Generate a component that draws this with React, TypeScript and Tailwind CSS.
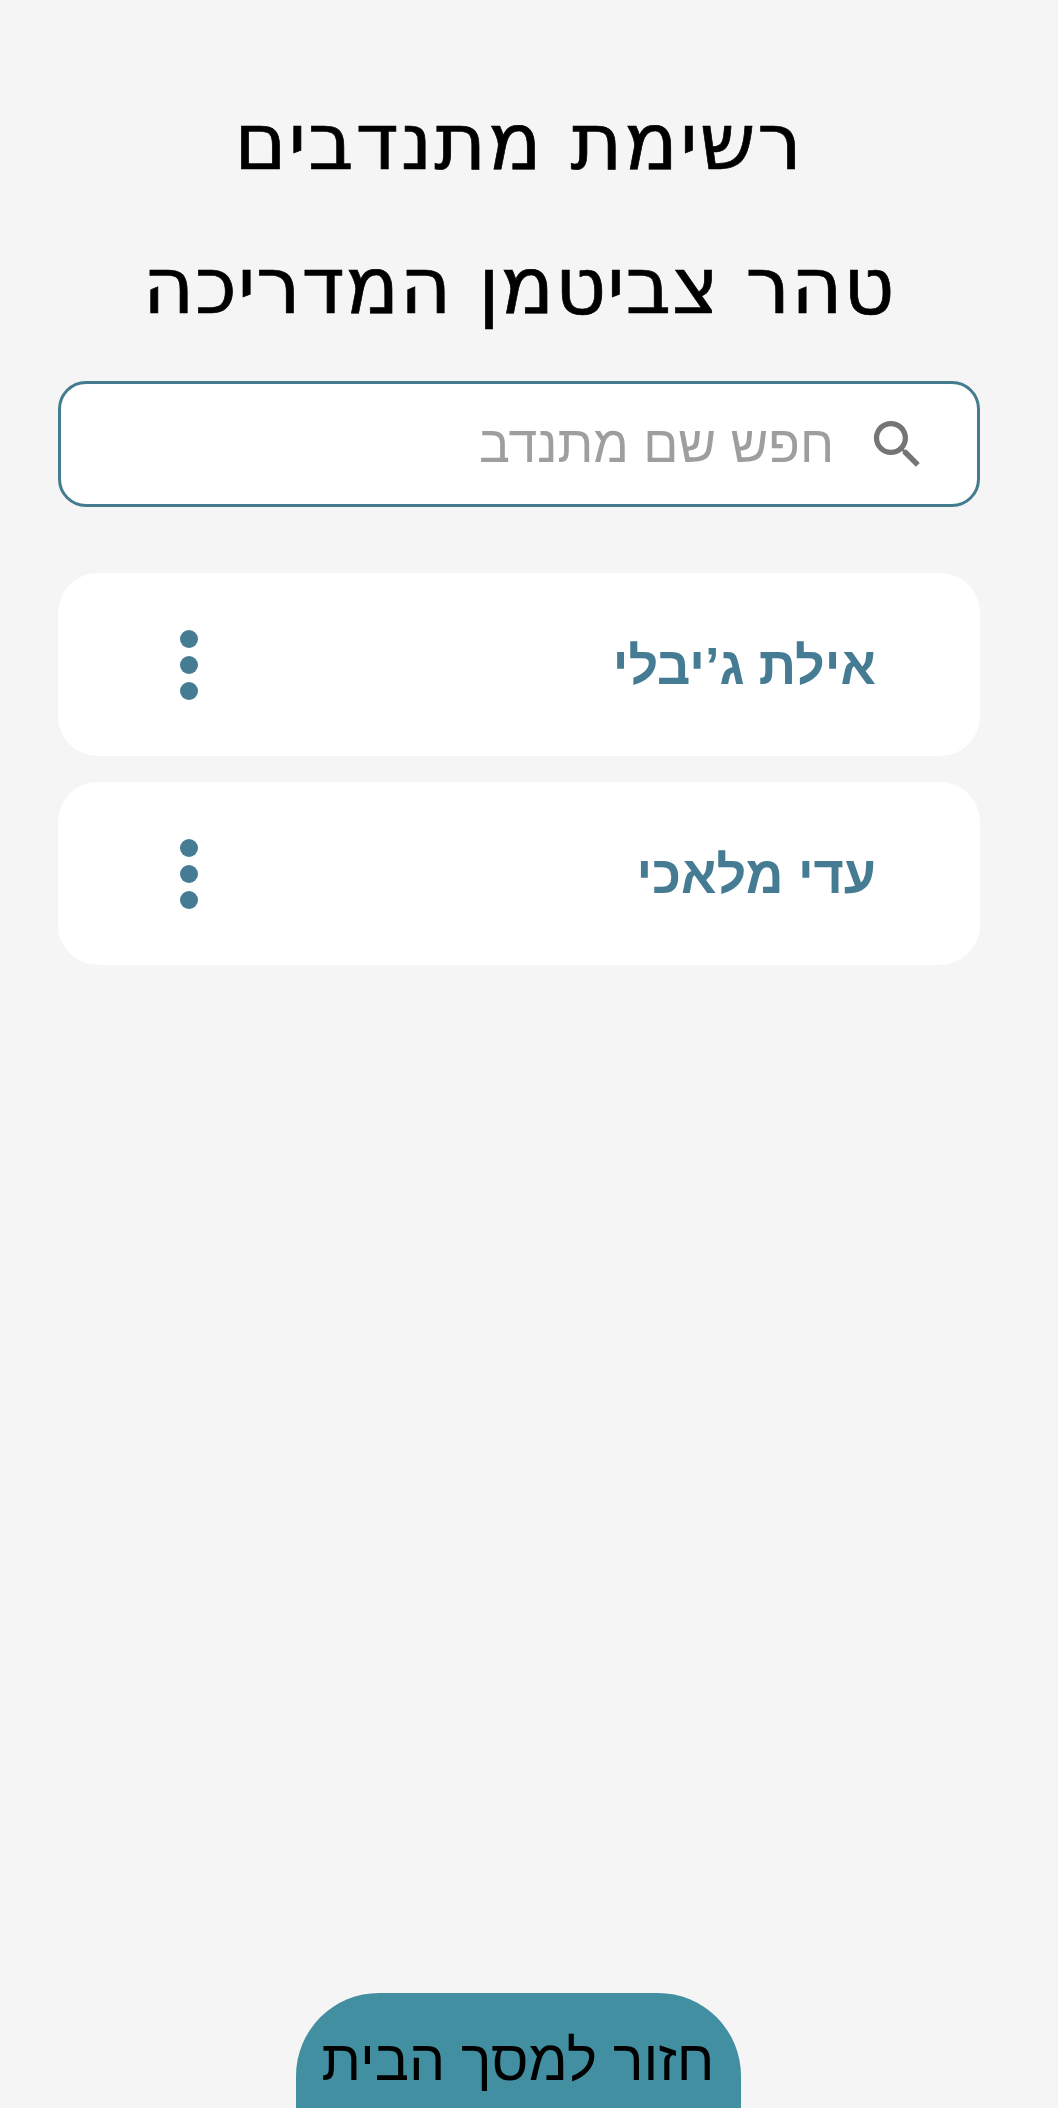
const volunteers = ["אילת ג’יבלי", "עדי מלאכי"];

function Card({ name }: { name: string }) {
  return (
    <li className="flex h-[183px] w-full items-center justify-between rounded-[40px] bg-white pr-[104px] pl-[122px]">
      <span className="pt-[3px] text-[52px] font-bold leading-none whitespace-nowrap text-[#457b93]">{name}</span>
      <span className="flex flex-col gap-2">
        <i className="size-[18px] rounded-full bg-[#457b93]" />
        <i className="size-[18px] rounded-full bg-[#457b93]" />
        <i className="size-[18px] rounded-full bg-[#457b93]" />
      </span>
    </li>
  );
}

export default function App() {
  return (
    <main dir="rtl" className="flex h-[2108px] w-[1058px] flex-col items-start overflow-hidden bg-[#f5f5f5] pr-[78px] font-['Liberation_Sans',sans-serif] text-black">
      <header className="flex h-[358px] w-[922px] flex-col items-center pt-[70px] font-['DejaVu_Sans',sans-serif] text-[79px] leading-[144px] [-webkit-text-stroke:0.7px_black]">
        <h1 className="tracking-[1.9px] whitespace-nowrap">רשימת מתנדבים</h1>
        <h2 className="tracking-[0.8px] whitespace-nowrap">טהר צביטמן המדריכה</h2>
      </header>
      <label className="mt-[23px] flex h-[126px] w-[922px] items-center rounded-[28px] border-3 border-[#457b8f] bg-white pr-[48px]">
        <svg viewBox="0 0 24 24" className="size-[63px] fill-[#757575]"><path d="M15.5 14h-.79l-.28-.27A6.47 6.47 0 0 0 16 9.5 6.5 6.5 0 1 0 9.5 16c1.61 0 3.09-.59 4.23-1.57l.27.28v.79l5 4.99L20.49 19l-4.99-5zm-6 0C7.01 14 5 11.99 5 9.5S7.01 5 9.5 5 14 7.01 14 9.5 11.99 14 9.5 14z" /></svg>
        <span className="mr-[32px] pt-px text-[51.8px] text-[#9e9e9e]">חפש שם מתנדב</span>
      </label>
      <ul className="mt-[66px] flex w-[922px] flex-col gap-[26px]">
        {volunteers.map((name) => <Card key={name} name={name} />)}
      </ul>
      <div className="mt-auto flex w-[922px] justify-center">
        <button className="mr-[2px] h-[115px] w-[445px] rounded-t-[83px] bg-[#418fa1] pt-[20px] text-[57.2px] whitespace-nowrap">חזור למסך הבית</button>
      </div>
    </main>
  );
}
